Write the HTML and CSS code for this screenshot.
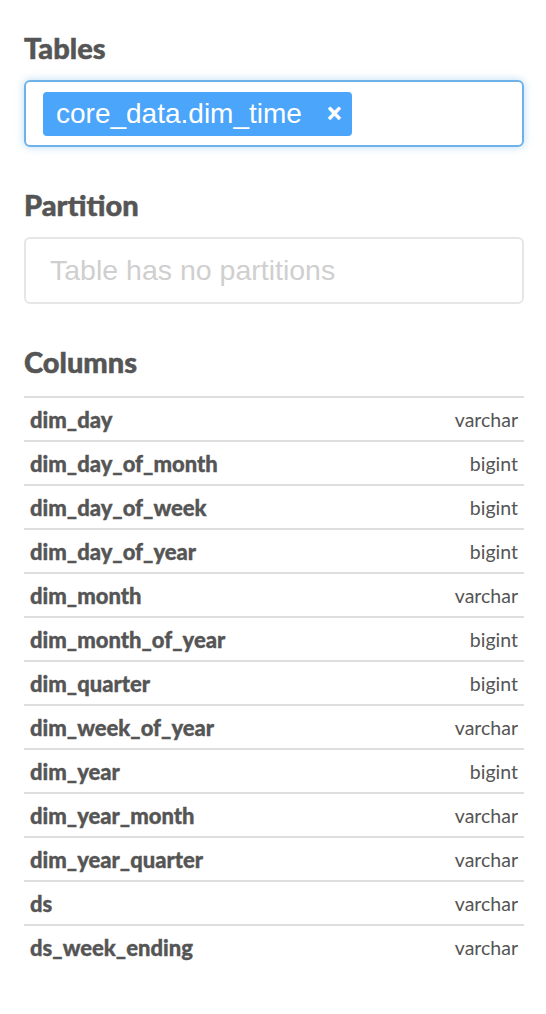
FILE: index.html
```html
<!DOCTYPE html>
<html>
<head>
<meta charset="utf-8">
<link rel="stylesheet" href="styles.css">
</head>
<body>
<div class="panel">
  <section class="section">
    <h2 class="heading">Tables</h2>
    <div class="field field-focus">
      <span class="chip"><span class="chip-label">core_data.dim_time</span><span class="chip-x">×</span></span>
    </div>
  </section>
  <section class="section">
    <h2 class="heading">Partition</h2>
    <div class="field">
      <span class="placeholder">Table has no partitions</span>
    </div>
  </section>
  <section class="section">
    <h2 class="heading heading-columns">Columns</h2>
    <div class="columns">
      <div class="row"><span class="name">dim_day</span><span class="type">varchar</span></div>
      <div class="row"><span class="name">dim_day_of_month</span><span class="type">bigint</span></div>
      <div class="row"><span class="name">dim_day_of_week</span><span class="type">bigint</span></div>
      <div class="row"><span class="name">dim_day_of_year</span><span class="type">bigint</span></div>
      <div class="row"><span class="name">dim_month</span><span class="type">varchar</span></div>
      <div class="row"><span class="name">dim_month_of_year</span><span class="type">bigint</span></div>
      <div class="row"><span class="name">dim_quarter</span><span class="type">bigint</span></div>
      <div class="row"><span class="name">dim_week_of_year</span><span class="type">varchar</span></div>
      <div class="row"><span class="name">dim_year</span><span class="type">bigint</span></div>
      <div class="row"><span class="name">dim_year_month</span><span class="type">varchar</span></div>
      <div class="row"><span class="name">dim_year_quarter</span><span class="type">varchar</span></div>
      <div class="row"><span class="name">ds</span><span class="type">varchar</span></div>
      <div class="row"><span class="name">ds_week_ending</span><span class="type">varchar</span></div>
    </div>
  </section>
</div>
</body>
</html>
```
FILE: styles.css
```css
html, body {
  margin: 0;
  padding: 0;
  background: #fff;
}
body {
  font-family: Lato, "Liberation Sans", sans-serif;
  color: #555;
}
.panel {
  padding: 31px 22px 0 24px;
}
.section {
  margin-bottom: 41px;
}
.heading {
  margin: 0 0 15px 0;
  font-size: 29px;
  font-weight: 900;
  line-height: 34px;
  color: #555;
  -webkit-text-stroke: 0.5px #555;
}
.heading-columns {
  margin-bottom: 17px;
}
.field {
  box-sizing: border-box;
  height: 67px;
  border: 2px solid #e6e6e6;
  border-radius: 6px;
  display: flex;
  align-items: center;
  padding: 0 24px;
  font-family: "Liberation Sans", Arial, sans-serif;
}
.field-focus {
  border-color: #6fb2ea;
  box-shadow: 0 0 8px rgba(102, 175, 233, 0.45);
  padding: 0 17px;
}
.chip {
  display: flex;
  align-items: center;
  height: 44px;
  padding: 0 10px 0 13px;
  background: #4ba5fb;
  border-radius: 4px;
  color: #fff;
}
.chip-label {
  font-size: 28px;
}
.chip-x {
  margin-left: 25px;
  font-size: 25px;
  font-weight: 700;
  -webkit-text-stroke: 0.5px #fff;
}
.placeholder {
  font-size: 28.5px;
  color: #cfcfcf;
}
.columns {
  border-top: 2px solid #dcdee0;
}
.row {
  display: flex;
  justify-content: space-between;
  align-items: center;
  height: 42px;
  padding: 0 6px;
  border-bottom: 2px solid #dcdee0;
}
.row:last-child {
  border-bottom: none;
}
.name {
  font-size: 22px;
  font-weight: 900;
  -webkit-text-stroke: 0.35px #555;
}
.type {
  font-size: 19.5px;
}
```
